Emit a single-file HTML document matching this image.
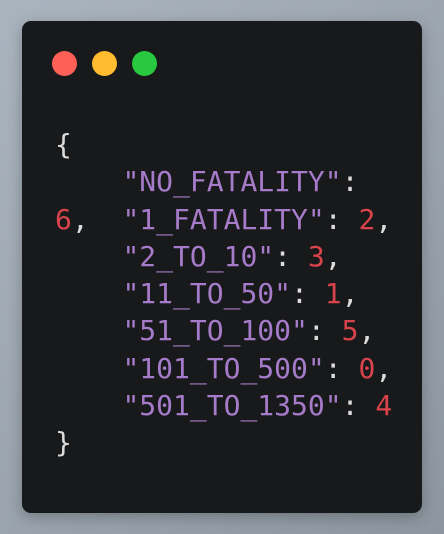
<!DOCTYPE html>
<html><head><style>
html,body{margin:0;width:444px;height:534px;overflow:hidden;background:linear-gradient(135deg,#aab4bf,#8d969f);}
.card{position:absolute;left:22px;top:21px;width:400px;height:492px;background:#18191b;border-radius:9px;box-shadow:0 4px 14px rgba(0,0,0,.25);}
.d{position:absolute;top:30px;width:25px;height:25px;border-radius:50%;}
pre{position:absolute;left:33px;top:105px;margin:0;font-family:"DejaVu Sans Mono","Liberation Mono",monospace;font-size:28px;line-height:37.3px;color:#dcdcdc;}
.s{color:#a67bc9}.n{color:#d9434b}
</style></head><body>
<div class="card">
<div class="d" style="left:30px;background:#fe5f57"></div>
<div class="d" style="left:70px;background:#febc2e"></div>
<div class="d" style="left:110px;background:#28c840"></div>
<pre>{
    <span class="s">"NO_FATALITY"</span>:
<span class="n">6</span>,  <span class="s">"1_FATALITY"</span>: <span class="n">2</span>,
    <span class="s">"2_TO_10"</span>: <span class="n">3</span>,
    <span class="s">"11_TO_50"</span>: <span class="n">1</span>,
    <span class="s">"51_TO_100"</span>: <span class="n">5</span>,
    <span class="s">"101_TO_500"</span>: <span class="n">0</span>,
    <span class="s">"501_TO_1350"</span>: <span class="n">4</span>
}</pre>
</div>
</body></html>
